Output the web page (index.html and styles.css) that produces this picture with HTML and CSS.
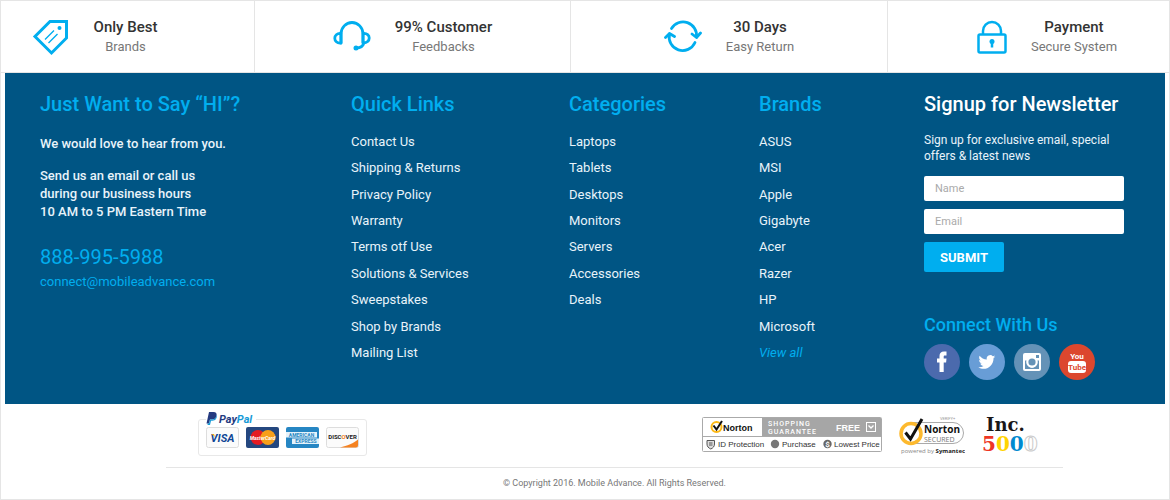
FILE: index.html
```html
<!DOCTYPE html>
<html lang="en">
<head>
  <meta charset="UTF-8">
  <meta name="viewport" content="width=device-width, initial-scale=1.0">
  <title>Mobile Advance</title>
  <link rel="stylesheet" href="styles.css">
</head>
<body>
  <footer class="footer">
    <section class="features">
      <div class="feature feature-first">
        <svg width="38" height="38" viewBox="0 0 38 38" fill="none" stroke="#00aeef" stroke-width="3">
          <path d="M18 3.500H34.500V20L19.500 35 3 18.500Z"/>
          <circle cx="27.500" cy="10" r="2" fill="#00aeef" stroke="none"/>
          <path d="M13 21.500 22 12.500M16.500 25 25.500 16" stroke-width="1.400"/>
        </svg>
        <div class="feature-text">
          <strong>Only Best</strong>
          <span>Brands</span>
        </div>
      </div>
      <div class="feature">
        <svg width="38" height="38" viewBox="0 0 38 38" fill="none" stroke="#00aeef" stroke-width="2.800" stroke-linecap="round" stroke-linejoin="round">
          <path d="M8 25V16a11 11.500 0 0 1 22 0v8.500"/>
          <path d="M8 15.500C-.300 14.500 -.300 26 8 25Z"/>
          <path d="M30 15.500c8.300-1 8.300 10 0 9.500ZM31 25c-1 3-3 5-7.500 5"/>
          <circle cx="23" cy="30" r="1.500" fill="#00aeef" stroke-width="2"/>
        </svg>
        <div class="feature-text">
          <strong>99% Customer</strong>
          <span>Feedbacks</span>
        </div>
      </div>
      <div class="feature">
        <svg width="38" height="38" viewBox="0 0 38 38" fill="none" stroke="#00aeef" stroke-width="2.800" stroke-linecap="round" stroke-linejoin="round">
          <path d="M7.500 10.500A13.500 13.500 0 0 1 32.500 19"/>
          <path d="M28 16 32.500 19.500 36.500 15"/>
          <path d="M31 24.500A13.500 13.500 0 0 1 5.500 16"/>
          <path d="M1.500 19.500 5.500 15.500 10.500 18.500"/>
        </svg>
        <div class="feature-text">
          <strong>30 Days</strong>
          <span>Easy Return</span>
        </div>
      </div>
      <div class="feature feature-last">
        <svg width="30" height="38" viewBox="0 0 30 38" fill="none" stroke="#00aeef" stroke-width="2.500">
          <rect x="1.500" y="16.500" width="27" height="18" rx="1.500"/>
          <path d="M6 16V13a9 9 0 0 1 18 0v3"/>
          <circle cx="15" cy="23.500" r="2.500" fill="#00aeef" stroke="none"/>
          <path d="M15 24v5.500"/>
        </svg>
        <div class="feature-text">
          <strong>Payment</strong>
          <span>Secure System</span>
        </div>
      </div>
    </section>

    <section class="main">
      <div class="contact">
        <h2>Just Want to Say “HI”?</h2>
        <p>We would love to hear from you.</p>
        <p>Send us an email or call us<br>during our business hours<br>10 AM to 5 PM Eastern Time</p>
        <a class="phone" href="tel:8889955988">888-995-5988</a>
        <a class="email" href="mailto:connect@mobileadvance.com">connect@mobileadvance.com</a>
      </div>

      <nav>
        <h2>Quick Links</h2>
        <ul class="links">
          <li><a href="#">Contact Us</a></li>
          <li><a href="#">Shipping &amp; Returns</a></li>
          <li><a href="#">Privacy Policy</a></li>
          <li><a href="#">Warranty</a></li>
          <li><a href="#">Terms otf Use</a></li>
          <li><a href="#">Solutions &amp; Services</a></li>
          <li><a href="#">Sweepstakes</a></li>
          <li><a href="#">Shop by Brands</a></li>
          <li><a href="#">Mailing List</a></li>
        </ul>
      </nav>

      <nav>
        <h2>Categories</h2>
        <ul class="links">
          <li><a href="#">Laptops</a></li>
          <li><a href="#">Tablets</a></li>
          <li><a href="#">Desktops</a></li>
          <li><a href="#">Monitors</a></li>
          <li><a href="#">Servers</a></li>
          <li><a href="#">Accessories</a></li>
          <li><a href="#">Deals</a></li>
        </ul>
      </nav>

      <nav>
        <h2>Brands</h2>
        <ul class="links">
          <li><a href="#">ASUS</a></li>
          <li><a href="#">MSI</a></li>
          <li><a href="#">Apple</a></li>
          <li><a href="#">Gigabyte</a></li>
          <li><a href="#">Acer</a></li>
          <li><a href="#">Razer</a></li>
          <li><a href="#">HP</a></li>
          <li><a href="#">Microsoft</a></li>
          <li><a class="view-all" href="#">View all</a></li>
        </ul>
      </nav>

      <div class="newsletter">
        <h2 class="white">Signup for Newsletter</h2>
        <p>Sign up for exclusive email, special offers &amp; latest news</p>
        <form>
          <input type="text" placeholder="Name" aria-label="Name">
          <input type="email" placeholder="Email" aria-label="Email">
          <button type="submit">SUBMIT</button>
        </form>
        <h3>Connect With Us</h3>
        <div class="social">
          <a href="#" aria-label="Facebook">
            <svg width="36" height="36" viewBox="0 0 36 36">
              <circle cx="18" cy="18" r="18" fill="#4b6aad"/>
              <path d="M15.500 28V18.500H13V14.500h2.500V12c0-3 1.500-4.500 4.500-4.500h2.500v4H21c-1 0-1.300.400-1.300 1.300v1.700h2.800l-.400 4h-2.400V28Z" fill="#fff"/>
            </svg>
          </a>
          <a href="#" aria-label="Twitter">
            <svg width="36" height="36" viewBox="0 0 36 36">
              <circle cx="18" cy="18" r="18" fill="#689dd6"/>
              <path d="M26.500 12.700c-.600.300-1.300.500-2 .600.700-.400 1.300-1.100 1.500-1.900-.700.400-1.400.700-2.200.800a3.500 3.500 0 0 0-6 3.200c-2.900-.100-5.500-1.500-7.200-3.700-.900 1.600-.500 3.600 1.100 4.700-.600 0-1.100-.200-1.600-.400 0 1.700 1.200 3.100 2.800 3.400-.500.100-1 .200-1.600.100.400 1.400 1.700 2.400 3.200 2.400a7 7 0 0 1-5.100 1.400c5.800 3.700 15 .600 15.200-9.300.7-.400 1.400-.800 1.900-1.300Z" fill="#fff"/>
            </svg>
          </a>
          <a href="#" aria-label="Instagram">
            <svg width="36" height="36" viewBox="0 0 36 36">
              <circle cx="18" cy="18" r="18" fill="#6492b7"/>
              <rect x="9" y="9" width="18" height="18" rx="2" fill="#fff"/>
              <path d="M11 16.500h2.500a5 5 0 1 0 9 0H25V25H11Z" fill="#6492b7"/>
              <circle cx="18" cy="18" r="5.800" fill="#fff"/>
              <circle cx="18" cy="18" r="3.600" fill="#6492b7"/>
              <rect x="22" y="11" width="3" height="3" fill="#6492b7"/>
            </svg>
          </a>
          <a href="#" aria-label="YouTube">
            <svg width="36" height="36" viewBox="0 0 36 36">
              <circle cx="18" cy="18" r="18" fill="#dc472e"/>
              <text class="youtube-text" x="18" y="15" fill="#fff">You</text>
              <rect x="9" y="17" width="18" height="12" rx="3" fill="#fff"/>
              <text class="youtube-text" x="18" y="26" fill="#dc472e">Tube</text>
            </svg>
          </a>
        </div>
      </div>
    </section>

    <section class="bottom">
      <div class="badges">
        <fieldset class="payments">
          <legend>
            <svg width="50" height="14" viewBox="0 0 50 14">
              <path d="M3 0h4.500C10 0 11 1.500 10.500 4 10 6.500 8 7.500 6 7.500H4L3 11.500H.5Z" fill="#253b80"/>
              <path d="M10.500 3c1 3-1 5.700-4 5.700H5L4 13H1.500l.3-1.500H3l1-4h2c2.500 0 4.200-1.500 4.500-4.500Z" fill="#179bd7"/>
              <text class="paypal-text" x="13" y="11" fill="#253b80">Pay<tspan fill="#179bd7">Pal</tspan></text>
            </svg>
          </legend>
          <svg width="33" height="21" viewBox="0 0 33 21">
            <rect x=".5" y=".5" width="32" height="20" rx="2" fill="#fbfbfb" stroke="#ddd"/>
            <text class="visa-text" x="16.500" y="14.500" fill="#0e4595">VISA</text>
            <path d="M5.500 7h2.500l1 3Z" fill="#f2ae14"/>
          </svg>
          <svg width="33" height="21" viewBox="0 0 33 21">
            <rect width="33" height="21" rx="2" fill="#24477f"/>
            <circle cx="12" cy="10.500" r="7.500" fill="#e31b23"/>
            <circle cx="22" cy="10.500" r="7.500" fill="#f79f1a"/>
            <text class="master-text" x="16.500" y="12.500" fill="#fff">MasterCard</text>
          </svg>
          <svg width="33" height="21" viewBox="0 0 33 21">
            <rect width="33" height="21" rx="2" fill="#2686c3"/>
            <path d="M0 5H31V10.500H0Z" fill="#e4f2fa"/>
            <path d="M6 11.500H33V17H6Z" fill="#e4f2fa"/>
            <text class="amex-text" x="15.500" y="10" fill="#2686c3">AMERICAN</text>
            <text class="amex-text" x="20" y="16" fill="#2686c3">EXPRESS</text>
          </svg>
          <svg width="33" height="21" viewBox="0 0 33 21">
            <rect x=".5" y=".5" width="32" height="20" rx="2" fill="#fbfbfb" stroke="#ddd"/>
            <path d="M32 12.500V18.500a2 2 0 0 1-2 2H14C21 19 28 16 32 12.500Z" fill="#f58220"/>
            <text class="discover-text" x="16.500" y="11.500" fill="#222">DISC<tspan fill="#f58220">O</tspan>VER</text>
          </svg>
        </fieldset>

        <div class="seals">
          <svg width="180" height="36" viewBox="0 0 180 36">
            <rect x=".5" y=".5" width="179" height="34" rx="1" fill="#fff" stroke="#aaa"/>
            <path d="M60 1H179V19H60Z" fill="#a6a6a6"/>
            <path d="M1 19.500H179" stroke="#aaa"/>
            <circle cx="14.500" cy="10" r="5" fill="none" stroke="#fdb813" stroke-width="2"/>
            <path d="M11.500 8.500 14.500 12.500 20 4" fill="none" stroke="#111" stroke-width="2"/>
            <text class="norton-small" x="21" y="14" fill="#111">Norton</text>
            <text class="guarantee-text" x="66" y="9" fill="#fff">SHOPPING</text>
            <text class="guarantee-text" x="66" y="16.500" fill="#fff">GUARANTEE</text>
            <text class="free-text" x="134" y="14" fill="#fff">FREE</text>
            <rect x="164.500" y="5.500" width="9" height="9" fill="none" stroke="#fff"/>
            <path d="M166.500 8.500 169 11 171.500 8.500" fill="none" stroke="#fff" stroke-width="1.300"/>
            <path d="M5 23.500h7.500V27c0 2.500-1.500 4-3.700 5C6.500 31 5 29.500 5 27Z" fill="#ddd" stroke="#555"/>
            <path d="M7 26h3.500M7 28h3.500" stroke="#555"/>
            <text class="perk-text" x="16" y="30" fill="#333">ID Protection</text>
            <circle cx="73" cy="27" r="4.200" fill="#777"/>
            <text class="perk-text" x="80" y="30" fill="#333">Purchase</text>
            <circle cx="125.500" cy="27" r="4.200" fill="#666"/>
            <text class="dollar-text" x="125.500" y="30" fill="#fff">$</text>
            <text class="perk-text" x="132" y="30" fill="#333">Lowest Price</text>
          </svg>
          <svg width="66" height="40" viewBox="0 0 66 40">
            <text class="verify-text" x="41" y="5" fill="#999">VERIFY+</text>
            <path d="M14 7.500H54a10.500 10.500 0 0 1 0 21H14" fill="#fff" stroke="#aaa"/>
            <circle cx="12" cy="18.500" r="10" fill="#fff" stroke="#fdb92e" stroke-width="3.500"/>
            <path d="M6.500 17.500 11.500 24 23 4" fill="none" stroke="#111" stroke-width="3"/>
            <text class="norton-big" x="25" y="18" fill="#111">Norton</text>
            <text class="secured-text" x="25" y="26.500" fill="#777">SECURED</text>
            <text class="powered-text" x="2" y="38" fill="#888">powered by <tspan class="bold" fill="#222">Symantec</tspan></text>
          </svg>
          <svg width="56" height="42" viewBox="0 0 56 42">
            <text class="inc-text" x="4" y="17" fill="#1a1718">Inc.</text>
            <text class="inc-number" x="0" y="37" fill="#ee3524">5<tspan fill="#ffd400">0</tspan><tspan fill="#0089cf">0</tspan><tspan fill="#fff" stroke="#ccc">0</tspan></text>
          </svg>
        </div>
      </div>
      <p class="copyright">© Copyright 2016. Mobile Advance. All Rights Reserved.</p>
    </section>
  </footer>
</body>
</html>
```
FILE: styles.css
```css
* {
  box-sizing: border-box;
}

body {
  margin: 0;
  font-family: Roboto, sans-serif;
  font-size: 13px;
  background-color: #fff;
  color: #e8f3fa;
}

a {
  color: inherit;
  text-decoration: none;
}

svg {
  display: block;
  flex-shrink: 0;
}

h2,
h3,
p,
ul {
  margin: 0;
  padding: 0;
}

.footer {
  border: 1px solid #e5e5e5;
  min-height: 100vh;
}

/* top strip */
.features {
  display: grid;
  grid-template-columns: 254fr 316fr 317fr 281fr;
  border-bottom: 1px solid #e5e5e5;
}

.feature {
  display: flex;
  justify-content: center;
  align-items: center;
  gap: 24px;
  height: 71px;
  border-right: 1px solid #e5e5e5;
}

.feature-first {
  padding-right: 66px;
}

.feature-last {
  padding-left: 37px;
  border-right: none;
}

.feature-text {
  display: flex;
  flex-direction: column;
  text-align: center;
  line-height: 19px;
}

.feature-text strong {
  font-size: 15px;
  font-weight: 500;
  color: #333;
}

.feature-text span {
  font-size: 13px;
  color: #777;
}

/* blue area */
.main {
  display: grid;
  grid-template-columns: 311fr 218fr 190fr 165fr 200fr;
  margin: 0 4px;
  padding: 19px 41px 24px 35px;
  background-color: #005584;
}

h2 {
  font-size: 20px;
  font-weight: 500;
  line-height: 24px;
  color: #00aeef;
  white-space: nowrap;
}

h2.white {
  color: #fff;
}

.contact {
  display: flex;
  flex-direction: column;
  align-items: flex-start;
  line-height: 18px;
}

.contact p {
  margin-top: 14px;
  font-weight: 500;
}

.contact h2 + p {
  margin-top: 19px;
}

.phone {
  margin-top: 24px;
  font-size: 20px;
  line-height: 24px;
  color: #00aeef;
}

.email {
  margin-top: 4px;
  color: #00aeef;
}

.links {
  display: grid;
  grid-template-rows: repeat(9, 1fr);
  align-items: center;
  height: 238px;
  margin-top: 12px;
  list-style: none;
}

.view-all {
  font-style: italic;
  color: #00aeef;
}

.newsletter p {
  margin-top: 16px;
  font-size: 12px;
  line-height: 16px;
}

.newsletter form {
  display: flex;
  flex-direction: column;
  align-items: flex-start;
  gap: 8px;
  margin-top: 12px;
}

.newsletter input {
  width: 100%;
  height: 25px;
  padding: 0 11px;
  border: none;
  border-radius: 2px;
  background-color: #fff;
  font-family: inherit;
  font-size: 11px;
  color: #333;
}

.newsletter input::placeholder {
  color: #aaa;
}

.newsletter button {
  width: 80px;
  height: 30px;
  padding: 0;
  border: none;
  border-radius: 2px;
  background-color: #00aeef;
  color: #fff;
  font-family: inherit;
  font-size: 13px;
  font-weight: 700;
  cursor: pointer;
}

h3 {
  margin-top: 41px;
  font-size: 18px;
  font-weight: 500;
  line-height: 24px;
  color: #00aeef;
}

.social {
  display: flex;
  gap: 9px;
  margin-top: 7px;
}

/* badges and copyright */
.bottom {
  margin: 0 106px 0 165px;
}

.badges {
  display: flex;
  justify-content: space-between;
  align-items: flex-start;
  height: 64px;
  padding: 8px 25px 0 32px;
  border-bottom: 1px solid #e5e5e5;
}

.payments {
  display: flex;
  gap: 7px;
  margin: 0;
  padding: 1px 7px 7px;
  border: 1px solid #e8e8e8;
  border-radius: 3px;
}

.payments legend {
  padding: 0;
}

.seals {
  display: flex;
  align-items: center;
  gap: 17px;
  padding-top: 2px;
}

.copyright {
  font-size: 9px;
  line-height: 31px;
  text-align: center;
  color: #777;
}

/* logo lettering */
.youtube-text {
  font-size: 8px;
  font-weight: 700;
  text-anchor: middle;
}

.paypal-text {
  font-size: 11px;
  font-weight: 700;
  font-style: italic;
}

.visa-text {
  font-size: 11px;
  font-weight: 700;
  font-style: italic;
  text-anchor: middle;
}

.master-text {
  font-size: 5px;
  font-weight: 700;
  font-style: italic;
  text-anchor: middle;
}

.amex-text {
  font-size: 5px;
  font-weight: 700;
  text-anchor: middle;
}

.discover-text {
  font-size: 6px;
  font-weight: 700;
  text-anchor: middle;
}

.norton-small {
  font-family: "Liberation Sans", sans-serif;
  font-size: 9px;
  font-weight: 700;
}

.guarantee-text {
  font-size: 7px;
  font-weight: 500;
  letter-spacing: 1px;
}

.free-text {
  font-family: "Liberation Sans", sans-serif;
  font-size: 9px;
  font-weight: 700;
}

.perk-text {
  font-family: "Liberation Sans", sans-serif;
  font-size: 8px;
}

.dollar-text {
  font-size: 8px;
  font-weight: 700;
  text-anchor: middle;
}

.verify-text {
  font-size: 4px;
}

.norton-big {
  font-family: "Open Sans", sans-serif;
  font-size: 10px;
  font-weight: 700;
}

.secured-text {
  font-family: "Open Sans", sans-serif;
  font-size: 7px;
}

.powered-text {
  font-family: "Open Sans", sans-serif;
  font-size: 6px;
}

.bold {
  font-weight: 700;
}

.inc-text {
  font-family: "DejaVu Serif", serif;
  font-size: 18px;
  font-weight: 700;
}

.inc-number {
  font-family: "DejaVu Serif", serif;
  font-size: 20px;
  font-weight: 700;
}
```
